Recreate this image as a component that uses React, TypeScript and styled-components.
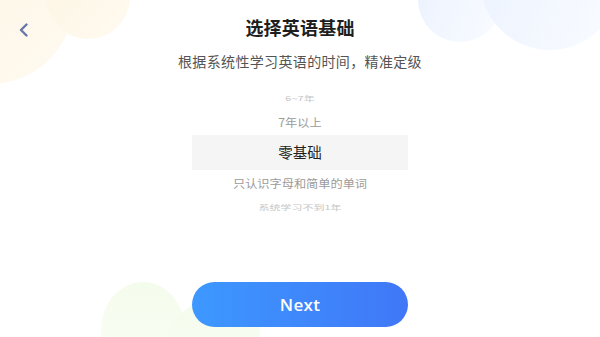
import React, { useState } from "react";
import styled, { createGlobalStyle } from "styled-components";

const Global = createGlobalStyle`
  html, body { margin: 0; padding: 0; background: #ffffff; }
  #root { width: 600px; height: 337px; }
  * { box-sizing: border-box; }
`;

const Page = styled.div`
  position: relative;
  width: 600px;
  height: 337px;
  overflow: hidden;
  background: #ffffff;
  font-family: "Noto Sans CJK SC", "Noto Sans", sans-serif;
`;

const Decor = styled.svg<{ $left?: number; $top?: number; $right?: number; $bottom?: number }>`
  position: absolute;
  ${(p) => (p.$left !== undefined ? `left: ${p.$left}px;` : "")}
  ${(p) => (p.$right !== undefined ? `right: ${p.$right}px;` : "")}
  ${(p) => (p.$top !== undefined ? `top: ${p.$top}px;` : "")}
  ${(p) => (p.$bottom !== undefined ? `bottom: ${p.$bottom}px;` : "")}
  pointer-events: none;
  z-index: 0;
`;

const Content = styled.div`
  position: relative;
  z-index: 1;
  display: flex;
  flex-direction: column;
  align-items: center;
  height: 100%;
`;

const Header = styled.header`
  width: 100%;
  height: 51px;
  display: grid;
  grid-template-columns: 48px 1fr 48px;
  align-items: center;
`;

const BackButton = styled.button`
  width: 48px;
  height: 48px;
  margin-top: 6px;
  border: 0;
  padding: 0;
  background: transparent;
  display: flex;
  align-items: center;
  justify-content: center;
  cursor: pointer;
`;

const Title = styled.h1`
  margin: 0;
  text-align: center;
  font-size: 18px;
  line-height: 51px;
  font-weight: 700;
  color: #1e1e1e;
  letter-spacing: 0.2px;
`;

const Subtitle = styled.p`
  margin: 0;
  font-size: 14px;
  line-height: 20px;
  color: #545454;
  letter-spacing: 0.35px;
`;

const Picker = styled.div`
  margin-top: 16px;
  width: 216px;
  display: flex;
  flex-direction: column;
`;

type Level = 0 | 1 | 2;

const Row = styled.div<{ $level: Level; $h: number }>`
  height: ${(p) => p.$h}px;
  display: flex;
  align-items: center;
  justify-content: center;
  background: ${(p) => (p.$level === 0 ? "#f5f5f5" : "transparent")};
  color: ${(p) => (p.$level === 0 ? "#1f1f1f" : p.$level === 1 ? "#9b9b9b" : "#c6c6c6")};
  font-size: ${(p) => (p.$level === 0 ? 14.5 : p.$level === 1 ? 12.2 : 11)}px;
  font-weight: 400;
  line-height: 1;
`;

const RowText = styled.span<{ $level: Level }>`
  display: inline-block;
  transform: scaleY(${(p) => (p.$level === 2 ? 0.62 : p.$level === 1 ? 0.92 : 1)});
`;

const NextButton = styled.button`
  margin-top: auto;
  margin-bottom: 10px;
  width: 216px;
  height: 45px;
  border: 0;
  border-radius: 23px;
  background: linear-gradient(90deg, #3d98ff 0%, #4077f7 100%);
  color: #ffffff;
  font-family: "Open Sans", "Lato", sans-serif;
  font-size: 17px;
  font-weight: 600;
  letter-spacing: 0.3px;
  cursor: pointer;
`;

const options = ["6~7年", "7年以上", "零基础", "只认识字母和简单的单词", "系统学习不到1年"];
const heights = [22, 26, 35, 26, 22];

export default function App() {
  const [selected] = useState(2);
  return (
    <Page>
      <Global />
      <Decor $left={0} $top={0} width="150" height="90" viewBox="0 0 150 90">
        <defs>
          <linearGradient id="cream" x1="0" y1="0" x2="1" y2="1">
            <stop offset="0" stopColor="#fdf5e2" />
            <stop offset="1" stopColor="#fffaf1" />
          </linearGradient>
        </defs>
        <circle cx="-10" cy="0" r="84" fill="url(#cream)" />
        <circle cx="88" cy="-3" r="42" fill="url(#cream)" />
      </Decor>
      <Decor $right={0} $top={0} width="200" height="60" viewBox="400 0 200 60">
        <defs>
          <linearGradient id="sky" x1="0" y1="0" x2="1" y2="0.4">
            <stop offset="0" stopColor="#ebf2fe" />
            <stop offset="1" stopColor="#f7faff" />
          </linearGradient>
        </defs>
        <circle cx="460" cy="0" r="42" fill="url(#sky)" />
        <circle cx="550" cy="-20" r="70" fill="url(#sky)" />
      </Decor>
      <Decor $left={80} $bottom={0} width="180" height="60" viewBox="80 277 180 60">
        <defs>
          <linearGradient id="leaf" x1="0" y1="0" x2="0" y2="1">
            <stop offset="0" stopColor="#f4fcec" />
            <stop offset="1" stopColor="#fbfef7" />
          </linearGradient>
        </defs>
        <ellipse cx="143" cy="330" rx="42" ry="48" fill="url(#leaf)" />
        <circle cx="215" cy="350" r="50" fill="url(#leaf)" />
      </Decor>
      <Content>
        <Header>
          <BackButton aria-label="back">
            <svg width="12" height="14" viewBox="0 0 12 14">
              <path
                d="M8.5 1.5 L3 7 L8.5 12.5"
                fill="none"
                stroke="#6876ab"
                strokeWidth="2.4"
                strokeLinecap="round"
                strokeLinejoin="round"
              />
            </svg>
          </BackButton>
          <Title>选择英语基础</Title>
          <span />
        </Header>
        <Subtitle>根据系统性学习英语的时间，精准定级</Subtitle>
        <Picker>
          {options.map((o, i) => {
            const d = Math.abs(i - selected);
            const level = (d > 2 ? 2 : d) as Level;
            return (
              <Row key={o} $level={level} $h={heights[i]}>
                <RowText $level={level}>{o}</RowText>
              </Row>
            );
          })}
        </Picker>
        <NextButton>Next</NextButton>
      </Content>
    </Page>
  );
}
